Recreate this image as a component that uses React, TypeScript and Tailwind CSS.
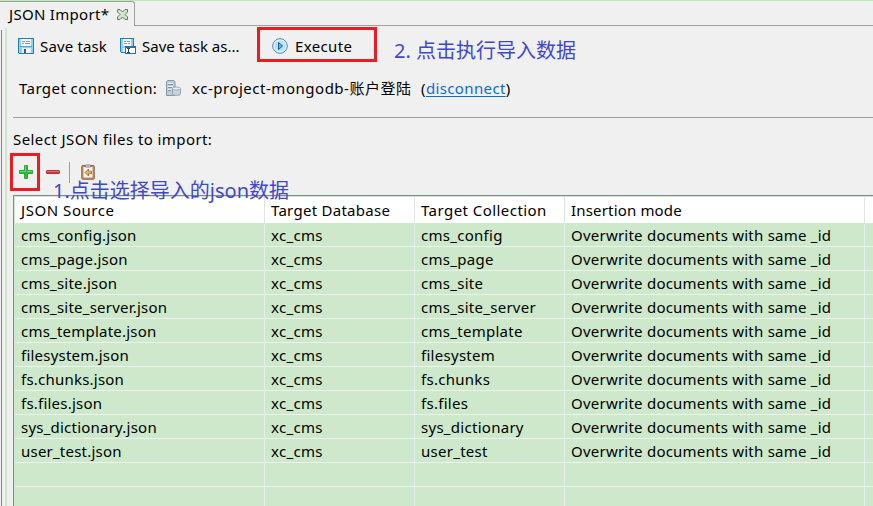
import type { ReactNode } from "react";

const rows = [
  ["cms_config.json", "cms_config"],
  ["cms_page.json", "cms_page"],
  ["cms_site.json", "cms_site"],
  ["cms_site_server.json", "cms_site_server"],
  ["cms_template.json", "cms_template"],
  ["filesystem.json", "filesystem"],
  ["fs.chunks.json", "fs.chunks"],
  ["fs.files.json", "fs.files"],
  ["sys_dictionary.json", "sys_dictionary"],
  ["user_test.json", "user_test"],
  ["", ""],
  ["", ""],
];

function Disk() {
  return (
    <svg width="16" height="16" viewBox="0 0 16 16" className="shrink-0" shapeRendering="crispEdges">
      <path d="M0 0h16v16H1l-1-1z" fill="#1f7fc0" />
      <path d="M1 1h14v14H1z" fill="#8fd0f7" />
      <path d="M3 1h10v7H3z" fill="#f7fafb" />
      <path d="M4 3h3v1H4zM8 3h4v1H8zM4 5h2v1H4zM7 5h5v1H7z" fill="#8d999e" />
      <path d="M2 8h12v1H2z" fill="#4ba5de" />
      <path d="M4 10h9v5H4z" fill="#e8ecef" />
      <path d="M6 11h2v4H6z" fill="#4b555b" />
      <path d="M8 11h4v4H8z" fill="#fafbfc" />
    </svg>
  );
}

function DiskAs() {
  return (
    <svg width="16" height="16" viewBox="0 0 16 16" className="shrink-0" shapeRendering="crispEdges">
      <path d="M0 0h14v15H1l-1-1z" fill="#1f7fc0" />
      <path d="M1 1h12v13H1z" fill="#8fd0f7" />
      <path d="M3 1h8v7H3z" fill="#f7fafb" />
      <path d="M4 3h2v1H4zM7 3h3v1H7zM4 5h3v1H4zM8 5h2v1H8z" fill="#8d999e" />
      <path d="M3 10h3v4H3z" fill="#e8ecef" />
      <path d="M5 8h11v8H5z" fill="#1e74ae" />
      <path d="M6 10h9v5H6z" fill="#fff" />
      <path d="M7 10h3v1H7zM8 11h1v3H8zM7 14h3v1H7z" fill="#38454d" />
    </svg>
  );
}

function Play() {
  return (
    <svg width="16" height="16" viewBox="0 0 16 16" className="shrink-0">
      <circle cx="8" cy="8" r="7.3" fill="#f2fbff" stroke="#4583b2" />
      <circle cx="8" cy="8" r="5.8" fill="#b4e2f8" />
      <path d="M6.500 4.500 10.500 8l-4 3.500z" fill="#69afdc" stroke="#235f92" />
    </svg>
  );
}

function Server() {
  return (
    <svg width="15" height="16" viewBox="0 0 15 16" className="shrink-0">
      <path d="M.5 1.500 2 .5h5.500l1.500 1V15.500H.5z" fill="#bccddb" stroke="#8297a8" />
      <path d="M2 4.500h5M2 7.500h4M2 10.500h3" stroke="#7895ab" />
      <path d="M2 3.500h5M2 6.500h5M2 9.500h3" stroke="#eef5fa" />
      <path d="M6.500 8.500V14c0 1.800 8 1.800 8 0V8.500z" fill="#cbd4db" stroke="#97a5b0" />
      <ellipse cx="10.500" cy="8.500" rx="4" ry="1.500" fill="#eef1f4" stroke="#9caab5" />
    </svg>
  );
}

function Close() {
  return (
    <svg width="11" height="11" viewBox="0 0 11 11" className="shrink-0">
      <path
        d="M.5.5H3l2.500 2.500L8 .5h2.500V3L8 5.500 10.500 8v2.500H8L5.500 8 3 10.500H.5V8L3 5.500.5 3z"
        fill="#cde9ca"
        stroke="#6a7568"
      />
    </svg>
  );
}

function Plus() {
  return (
    <svg width="14" height="14" viewBox="0 0 14 14" className="shrink-0">
      <path d="M5.500.5h3v5h5v3h-5v5h-3v-5h-5v-3h5z" fill="#2fb83f" stroke="#27a838" strokeLinejoin="round" />
      <path d="M6.500 1v5.500H1M8 6.500h5" stroke="#6fd473" fill="none" />
    </svg>
  );
}

function Minus() {
  return (
    <svg width="14" height="4" viewBox="0 0 14 4" className="shrink-0">
      <rect x=".5" y=".5" width="13" height="3" rx=".5" fill="#c9383f" stroke="#bb3640" />
      <path d="M1 1.500h12" stroke="#df6c6e" />
    </svg>
  );
}

function Paste() {
  return (
    <svg width="14" height="16" viewBox="0 0 14 16" className="shrink-0">
      <rect x=".75" y="1.500" width="12.500" height="13.750" rx="1" fill="#c18a5a" stroke="#906443" />
      <path d="M2.500 3h9v10.500h-9z" fill="#fbf9f5" />
      <path d="M4.500 1h5v2h-5z" fill="#e4e4e4" stroke="#858585" />
      <path d="M4 8.500 7.500 5v2.200H10.500v2.600H7.500V12z" fill="#f0b069" stroke="#a5672b" strokeWidth=".9" />
    </svg>
  );
}

function Cell({ head = false, className, children }: { head?: boolean; className: string; children?: ReactNode }) {
  return (
    <div
      className={`flex h-full shrink-0 items-center border-r pl-1.5 whitespace-pre ${
        head ? "border-[#e2e2e6]" : "border-[#e3eeee]"
      } ${className}`}
    >
      {children}
    </div>
  );
}

export default function App() {
  return (
    <div className="relative flex h-[506px] w-[873px] flex-col overflow-hidden border-t border-[#b5efb3] bg-[#f0f0f0] font-['Noto_Sans','Noto_Sans_CJK_SC',sans-serif] text-[15px] leading-6 whitespace-nowrap text-black">
      <div className="flex h-[25px] shrink-0">
        <div className="flex w-[135px] shrink-0 items-center gap-2 rounded-tr-[3px] border-t border-r border-[#a0a0a0] pl-[9px]">
          <span className="w-[100px] tracking-[0.3px]">JSON Import*</span>
          <Close />
        </div>
        <div className="flex-1 border-b border-[#a0a0a0]" />
      </div>

      <div className="flex min-h-0 flex-1">
        <div className="mt-1 w-[2px] shrink-0 border-r border-[#85868c]" />
        <div className="mt-0.5 ml-[3px] w-[2px] shrink-0 bg-[#cde8ca]" />
        <div className="flex min-w-0 flex-1 flex-col pl-1.5">
          <div className="flex h-10 shrink-0 items-center pl-[5px]">
            <div className="flex w-[102px] items-center gap-1.5">
              <Disk />
              <span className="tracking-[0.15px]">Save task</span>
            </div>
            <div className="flex w-[152px] items-center gap-1.5">
              <DiskAs />
              <span className="tracking-[0.03px]">Save task as...</span>
            </div>
            <div className="flex items-center gap-[7px]">
              <Play />
              <span className="tracking-[0.35px]">Execute</span>
            </div>
          </div>

          <div className="flex h-11 shrink-0 items-center pl-1.5">
            <span className="w-[147px] tracking-[0.42px]">Target connection:</span>
            <Server />
            <span className="ml-[11px] w-[229px] tracking-[0.52px]">xc-project-mongodb-账户登陆</span>
            <span className="tracking-[0.37px]">
              (<span className="text-[#0a6cd6] underline underline-offset-2">disconnect</span>)
            </span>
          </div>

          <div className="mt-[7px] h-px shrink-0 bg-[#a0a0a0]" />
          <div className="flex h-[42px] shrink-0 items-center tracking-[0.42px]">Select JSON files to import:</div>

          <div className="flex h-[35px] shrink-0 items-start pt-[3px] pl-1.5">
            <div className="flex h-[18px] items-center">
              <Plus />
              <div className="w-[13px]" />
              <Minus />
              <div className="mr-[11px] ml-[9px] h-[21px] w-px bg-[#a0a0a0]" />
              <Paste />
            </div>
          </div>

          <div className="min-h-0 flex-1 overflow-hidden border-t border-l border-[#828790] bg-[#cde8ca] pt-px pl-px">
            <div className="flex h-[26px] bg-white">
              <Cell head className="w-[250px] tracking-[0.55px]">JSON Source</Cell>
              <Cell head className="w-[150px] tracking-[0.27px]">Target Database</Cell>
              <Cell head className="w-[150px] tracking-[0.45px]">Target Collection</Cell>
              <Cell head className="w-[300px] tracking-[0.17px]">Insertion mode</Cell>
            </div>
            {rows.map(([source, collection], i) => (
              <div key={i} className="flex h-6 border-b border-[#f0f0f0]">
                <Cell className="w-[250px] tracking-[0.22px]">{source}</Cell>
                <Cell className="w-[150px] tracking-[0.3px]">{source && "xc_cms"}</Cell>
                <Cell className="w-[150px] tracking-[0.28px]">{collection}</Cell>
                <Cell className="w-[300px] tracking-[0.23px]">{source && "Overwrite documents with same _id"}</Cell>
              </div>
            ))}
          </div>
        </div>
      </div>

      <div className="absolute top-[26px] left-[257px] h-[35px] w-[120px] border-[3px] border-[#ed1c24]" />
      <div className="absolute top-[152px] left-[10px] h-[38px] w-[30px] border-[3px] border-[#ed1c24]" />
      <div className="absolute top-[36px] left-[394px] text-[20px] leading-7 text-[#3f48cc]">2. 点击执行导入数据</div>
      <div className="absolute top-[176px] left-[53px] text-[20px] leading-7 text-[#3f48cc]">1.点击选择导入的json数据</div>
    </div>
  );
}
